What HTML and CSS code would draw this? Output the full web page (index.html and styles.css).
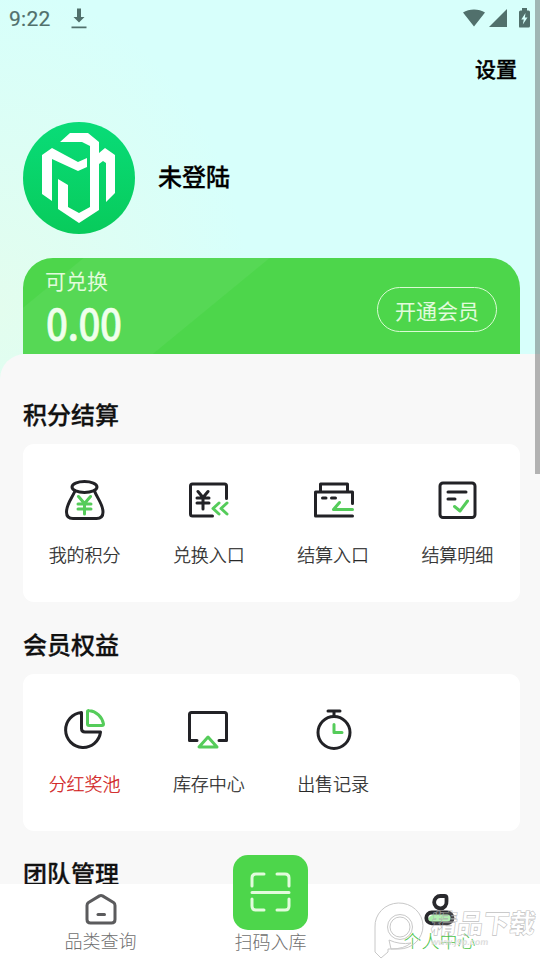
FILE: index.html
```html
<!DOCTYPE html>
<html lang="zh-CN">
<head>
<meta charset="utf-8">
<title>个人中心</title>
<link rel="stylesheet" href="styles.css">
</head>
<body>
<div class="app">
  <header class="status">
    <span class="clock">9:22</span>
    <svg class="download" width="16" height="22" viewBox="0 0 16 22"><path d="M6 .500h4v8.500h3.500L8 14.500 2.500 9H6zM.5 18.500h15v1.800H.5z"/></svg>
    <svg class="signals" width="68" height="22" viewBox="0 0 68 22"><path d="M0 4.500C6 .5 16 .5 22 4.500L11 18.500zM26 19 44 1v18zM56 2.500h3V0h5v2.500h1.500q1.500 0 1.500 1.500v14q0 1.500-1.500 1.500h-9Q56 19.500 56 18V4q0-1.500 1.500-1.500z"/><path class="bolt" d="m62.500 5-4.200 6.500h2.500l-1 5 4.700-7h-2.600z"/></svg>
  </header>
  <div class="toolbar">设置</div>
  <section class="profile">
    <svg class="avatar" width="112" height="112" viewBox="0 0 112 112">
      <defs><linearGradient id="g" x1="0" y1="0" x2="0" y2="1"><stop offset="0" stop-color="#09dc78"/><stop offset="1" stop-color="#08cb5b"/></linearGradient></defs>
      <circle cx="56" cy="56" r="56" fill="url(#g)"/>
      <g fill="#fff"><path d="M37 20 47 11H65L76 20V31L82 26 92 33V71L83 80V41L80 39 76 42V88L56 101 35 87V57L45 63V85L56 91 67 85V24L59 20Z"/><path d="M19 33 29 26 55 40 64 36V45L55 49 29 37V79L19 72Z"/></g>
    </svg>
    <h1>未登陆</h1>
  </section>
  <section class="member">
    <div><div class="caption">可兑换</div><div class="amount">0.00</div></div>
    <span class="join">开通会员</span>
  </section>
  <main class="sheet">
    <h2>积分结算</h2>
    <div class="panel">
      <div class="item"><svg class="icon" viewBox="0 0 44 44"><ellipse cx="21.500" cy="9" rx="12.500" ry="5.500"/><path d="M12 13C9 20 3.500 26 3.500 34Q3.500 40.500 10 40.500H33.500Q40 40.500 40 34C40 26 34 20 31.500 13"/><path class="green" d="m15.500 18.500 6 7 6-7M15 26h13M15 31h13M21.500 26v10"/></svg><span>我的积分</span></div>
      <div class="item"><svg class="icon" viewBox="0 -.5 44 44"><path d="M39.500 20V7.500Q39.500 5.500 37.500 5.500H5.500Q3.500 5.500 3.500 7.500V35.500Q3.500 37.500 5.500 37.500H25.500"/><path d="m11 13 5 6 5-6M10 19.500h12M10 24.500h12M16 20v10.500"/><path class="green" d="m32 24.500-6 5.500 6 5.500M40 24.500 34 30l6 5.500"/></svg><span>兑换入口</span></div>
      <div class="item"><svg class="icon" viewBox="0 -.5 44 44"><path d="M40.500 25V13.500H3.500V37.500H40.500M8.500 13.500V5.500H35.500V13.500M10.500 19.500h3.500M19.500 19.500h4"/><path class="green" d="m27.500 24-6 7h19"/></svg><span>结算入口</span></div>
      <div class="item"><svg class="icon" viewBox="0 -.5 44 44"><rect x="4" y="4.500" width="35" height="34.500" rx="3"/><path d="M12 13.500h18M12 20.500h7"/><path class="green" d="m18.500 28 5.500 4.500 7.500-10"/></svg><span>结算明细</span></div>
    </div>
    <h2>会员权益</h2>
    <div class="panel">
      <div class="item red"><svg class="icon" viewBox="0 0 44 44"><path d="M18.500 4.500A17.500 17.500 0 1 0 37.500 24H22Q18.500 24 18.500 20.500Z"/><path class="green" d="M24.500 3.500Q24.500 2.300 26 2.500A16.500 16.500 0 0 1 40.500 16Q40.500 17.500 39 17.500H26Q24.500 17.500 24.500 16Z"/></svg><span>分红奖池</span></div>
      <div class="item"><svg class="icon" viewBox="1 1 44 44"><path d="M11 33.500H3.500V7.500Q3.500 5.500 5.500 5.500H38.500Q40.500 5.500 40.500 7.500V33.500H33"/><path class="green" d="M22 30 13 40H31Z"/></svg><span>库存中心</span></div>
      <div class="item"><svg class="icon" viewBox="0 .5 44 44"><circle cx="22" cy="25" r="16"/><path d="M16 3.500h12M22 4v5"/><path class="green" d="M22 17v8h8"/></svg><span>出售记录</span></div>
    </div>
    <h2>团队管理</h2>
  </main>
  <nav class="tabs">
    <div class="tab"><svg class="tabicon" viewBox="0 0 36 36"><path d="M16.500 4.900q1.500-.9 3 0L30.500 11.500Q32 12.500 32 14.500v14q0 3.500-3.500 3.500h-21Q4 32 4 28.500v-14Q4 12.500 5.500 11.500Z"/><path d="M15 23.500h6.500"/></svg><span>品类查询</span></div>
    <div class="tab scan"><span class="scanbox"><svg width="42" height="42" viewBox="0 0 42 42"><path d="M2 14V6Q2 2 6 2H14M27 2h8q4 0 4 4v8M2 27v7q0 4 4 4h8M27 38h8q4 0 4-4v-7M2 20.500h37"/></svg></span><span>扫码入库</span></div>
    <div class="tab active"><svg class="tabicon" viewBox="0 0 36 36"><path class="leaf" d="M6 27.500q4-5 12-6h8q5 2 4 8l-3 3H8z"/><path d="M18.500 5H22.500Q24.500 5 24.500 7V10.500A6.200 6.200 0 1 1 18.500 5Z"/><rect x="4.300" y="21.500" width="26.200" height="10.800" rx="5.400"/></svg><span>个人中心</span></div>
  </nav>
  <div class="watermark"><svg width="52" height="58" viewBox="0 0 52 58"><path d="M2 50V25A24 23 0 1 1 26 47H15V50L8 56Z"/><circle cx="27" cy="25" r="12.500"/><circle cx="27" cy="25" r="10"/><path d="M16 38q11 5 22 3-7 6-20 6z"/></svg><div class="brand"><span>精品下载</span><small>www.j9p.com</small></div></div>
  <div class="scrollbar"></div>
</div>
</body>
</html>
```
FILE: styles.css
```css
* { box-sizing: border-box; }
body { margin: 0; font-family: "Noto Sans CJK SC", sans-serif; color: #111; }
.app {
  position: relative; width: 540px; height: 960px; overflow: hidden;
  display: flex; flex-direction: column;
  background: radial-gradient(ellipse 250px 320px at 0 310px, #e3fdee, #d7fffb);
}
svg { flex: none; }
.status { height: 37px; padding: 0 9px; display: flex; align-items: center; }
.clock { font: 400 21px/24px Roboto, sans-serif; color: #51706c; letter-spacing: .3px; width: 62px; -webkit-text-stroke: .2px #51706c; }
.download, .signals { fill: #51706c; }
.signals { margin-left: auto; }
.bolt { fill: #d5fffb; }
.toolbar { height: 66px; padding-right: 23px; text-align: right; font-size: 21px; font-weight: 500; line-height: 63px; color: #000; -webkit-text-stroke: .4px #000; }
.profile { height: 155px; padding: 19px 23px 24px; display: flex; align-items: center; gap: 23px; }
h1, h2 { margin: 0; font-weight: 500; font-size: 24px; -webkit-text-stroke: .3px currentColor; }
h1 { color: #000; padding-bottom: 5px; }
.member {
  height: 96px; margin: 0 20px 0 23px; padding: 0 23px; display: flex; justify-content: space-between;
  border-radius: 30px 30px 0 0; color: #f0ffec;
  background: linear-gradient(140.6deg, #4dd64b 38px, #56d855 39px, #56d855 156px, #4dd64b 157px);
}
.caption { font-size: 21px; line-height: 30px; margin: 7px 0 0 -1px; color: #e2fbdc; }
.amount { width: 82px; font-size: 42px; font-weight: 500; line-height: 48px; margin-top: 3px; letter-spacing: -.5px; transform: scaleX(.915); transform-origin: 0 0; -webkit-text-stroke: .6px #f0ffec; }
.join { width: 120px; height: 45px; margin-top: 29px; border: 1px solid #dafbd4; border-radius: 23px; text-align: center; font-size: 21px; line-height: 44px; color: #e2fbdc; }
.sheet { height: 530px; overflow: hidden; padding: 43px 20px 0 23px; background: #f8f8f8; border-radius: 25px 0 0 0; }
h2 { line-height: 34px; height: 36px; }
.panel { height: 158px; margin: 11px 0 25px; display: grid; grid-template-columns: repeat(4, 1fr); background: #fff; border-radius: 11px; }
.panel + h2 + .panel { height: 157px; margin-bottom: 25px; }
.item { display: flex; flex-direction: column; align-items: center; padding-top: 34px; font-size: 18px; line-height: 26px; color: #282828; font-weight: 300; -webkit-text-stroke: .25px currentColor; }
.item span { margin: 19px 1px 0 0; }
.panel + h2 + .panel .item span { margin-top: 18px; }
.item.red { color: #d11a1a; }
.icon { width: 44px; height: 44px; fill: none; stroke: #222226; stroke-width: 3; stroke-linecap: round; stroke-linejoin: round; }
.green { stroke: #55cc5a; }
.tabs { height: 76px; padding: 0 16px 0 17px; display: grid; grid-template-columns: repeat(3, 1fr); background: #fff; }
.tab { display: flex; flex-direction: column; align-items: center; padding: 7px 2px 0 0; font-size: 18px; line-height: 26px; font-weight: 300; color: #707070; }
.tabicon { width: 36px; height: 36px; margin-bottom: 0; fill: none; stroke: #5b5b5d; stroke-width: 3; stroke-linecap: round; stroke-linejoin: round; }
.scan { padding: 0; margin-top: -29px; }
.scanbox { width: 75px; height: 75px; display: grid; place-items: center; border-radius: 15px; background: #4dd64b; margin-bottom: -2px; }
.scanbox svg { fill: none; stroke: #e2fbdc; stroke-width: 3; stroke-linecap: round; }
.active { color: #4dc44b; padding-right: 0; }
.active .tabicon { stroke: #29292d; stroke-width: 3.800; }
.active .leaf { fill: #a9efa8; stroke: none; }
.watermark { position: absolute; left: 373px; top: 902px; display: flex; align-items: flex-start; }
.brand { display: flex; flex-direction: column; margin: 4px 0 0 6px; transform: skewX(-7deg); color: rgba(255,255,255,.15); -webkit-text-stroke: .6px rgba(175,175,175,.8); }
.brand span { font-size: 26px; line-height: 32px; font-weight: 900; }
.brand small { font: 700 9px/9px "Liberation Sans", sans-serif; margin-left: 2px; color: #ddd; -webkit-text-stroke: 0; }
.watermark svg { fill: none; stroke: #c8c8c8; stroke-width: 1; }
.scrollbar { position: absolute; right: 0; top: 0; width: 5px; height: 474px; background: rgba(80,80,80,.42); }
```
